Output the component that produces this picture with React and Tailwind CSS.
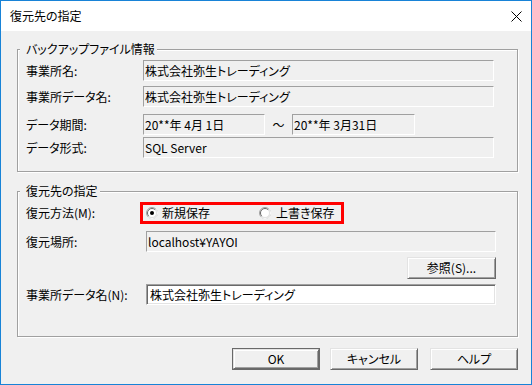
import React from "react";

const font = "font-['Noto_Sans_CJK_JP','Noto_Sans',sans-serif] [font-feature-settings:'palt']";

function Field({ w, children, white }) {
  return (
    <div
      className={
        "flex items-center h-[21px] pl-[1px] whitespace-pre text-[12px] leading-none text-black border " +
        (white
          ? "bg-white border-t-[#a0a0a0] border-l-[#a0a0a0] border-b-white border-r-white shadow-[inset_1px_1px_0_#696969,inset_-1px_-1px_0_#e3e3e3] pl-[3px]"
          : "bg-[#f0f0f0] border-t-[#a0a0a0] border-l-[#a0a0a0] border-b-white border-r-white")
      }
      style={{ width: w }}
    >
      {children}
    </div>
  );
}

function Btn({ children, def, w = 88 }) {
  const inner = (
    <div
      className="flex items-center justify-center h-full w-full bg-[#f0f0f0] border border-t-[#e3e3e3] border-l-[#e3e3e3] border-b-[#696969] border-r-[#696969] shadow-[inset_1px_1px_0_#fff,inset_-1px_-1px_0_#a0a0a0] text-[12px] leading-none text-black"
    >
      {children}
    </div>
  );
  if (def)
    return (
      <div className="h-[22px] border border-[#696969]" style={{ width: w }}>
        {inner}
      </div>
    );
  return (
    <div className="h-[22px]" style={{ width: w }}>
      {inner}
    </div>
  );
}

function Radio({ checked }) {
  return (
    <svg width="12" height="12" viewBox="0 0 12 12" className="shrink-0">
      <circle cx="6" cy="6" r="5.5" fill="#fff" stroke="#a0a0a0" />
      <path d="M9.9 2.1 A5.5 5.5 0 0 1 2.1 9.9" fill="none" stroke="#ffffff" />
      <path d="M2.8 9.2 A4.5 4.5 0 0 1 9.2 2.8" fill="none" stroke="#696969" />
      <path d="M9.2 2.8 A4.5 4.5 0 0 1 2.8 9.2" fill="none" stroke="#e3e3e3" />
      {checked && <circle cx="6" cy="6" r="2" fill="#000" />}
    </svg>
  );
}

function Group({ title, h, children, className = "" }) {
  return (
    <div
      className={
        "relative w-[501px] border border-[#a0a0a0] shadow-[inset_1px_1px_0_#fff,1px_1px_0_#fff] " +
        className
      }
      style={{ height: h }}
    >
      <div className="absolute left-[2px] top-[-8px] bg-[#f0f0f0] pl-[6px] pr-[2px] text-[12px] leading-[14px] text-black">
        {title}
      </div>
      {children}
    </div>
  );
}

function Label({ w, children }) {
  return (
    <div className="text-[12px] leading-none text-black shrink-0" style={{ width: w }}>
      {children}
    </div>
  );
}

export default function App() {
  return (
    <div className={"w-[532px] h-[385px] border border-[#1883d7] flex flex-col bg-[#f0f0f0] overflow-hidden " + font}>
      <div className="h-[30px] bg-white flex items-center justify-between pl-[9px] pr-[9px] shrink-0">
        <span className="text-[12px] text-black leading-none">復元先の指定</span>
        <svg width="11" height="11" viewBox="0 0 11 11">
          <path d="M0.5 0.5 L10.5 10.5 M10.5 0.5 L0.5 10.5" stroke="#000" strokeWidth="1" />
        </svg>
      </div>
      <div className="flex-1 flex flex-col pl-[16px]">
        <Group title="バックアップファイル情報" h={123} className="mt-[18px]">
          <div className="flex flex-col pl-[8px] pt-[10px]">
            <div className="flex items-center">
              <Label w={117}>事業所名:</Label>
              <Field w={351}>株式会社弥生トレーディング</Field>
            </div>
            <div className="flex items-center mt-[5px]">
              <Label w={117}>事業所データ名:</Label>
              <Field w={351}>株式会社弥生トレーディング</Field>
            </div>
            <div className="flex items-center mt-[7px]">
              <Label w={117}>データ期間:</Label>
              <Field w={122}>20**年 4月 1日</Field>
              <div className="w-[27px] text-center text-[12px] leading-none">～</div>
              <Field w={123}>20**年 3月31日</Field>
            </div>
            <div className="flex items-center mt-[2px]">
              <Label w={117}>データ形式:</Label>
              <Field w={351}>SQL Server</Field>
            </div>
          </div>
        </Group>
        <Group title="復元先の指定" h={146} className="mt-[19px]">
          <div className="flex flex-col pl-[8px] pt-[10px]">
            <div className="flex items-center">
              <Label w={114}>復元方法(M):</Label>
              <div className="w-[204px] h-[22px] border-[3px] border-[#ff0000] flex items-center pl-[3px]">
                <Radio checked />
                <span className="ml-[4px] text-[12px] leading-none">新規保存</span>
                <div className="ml-[49px] flex items-center">
                  <Radio />
                  <span className="ml-[5px] text-[12px] leading-none">上書き保存</span>
                </div>
              </div>
            </div>
            <div className="flex items-center mt-[7px]">
              <Label w={120}>復元場所:</Label>
              <Field w={350}>localhost¥YAYOI</Field>
            </div>
            <div className="flex justify-end w-[470px] mt-[5px]">
              <Btn w={89}>参照(S)...</Btn>
            </div>
            <div className="flex items-center mt-[5px]">
              <Label w={120}>事業所データ名(N):</Label>
              <Field w={350} white>株式会社弥生トレーディング</Field>
            </div>
          </div>
        </Group>
        <div className="flex justify-end pr-[13px] mt-[11px]">
          <Btn def>OK</Btn>
          <div className="ml-[10px]">
            <Btn>キャンセル</Btn>
          </div>
          <div className="ml-[12px]">
            <Btn>ヘルプ</Btn>
          </div>
        </div>
      </div>
    </div>
  );
}
